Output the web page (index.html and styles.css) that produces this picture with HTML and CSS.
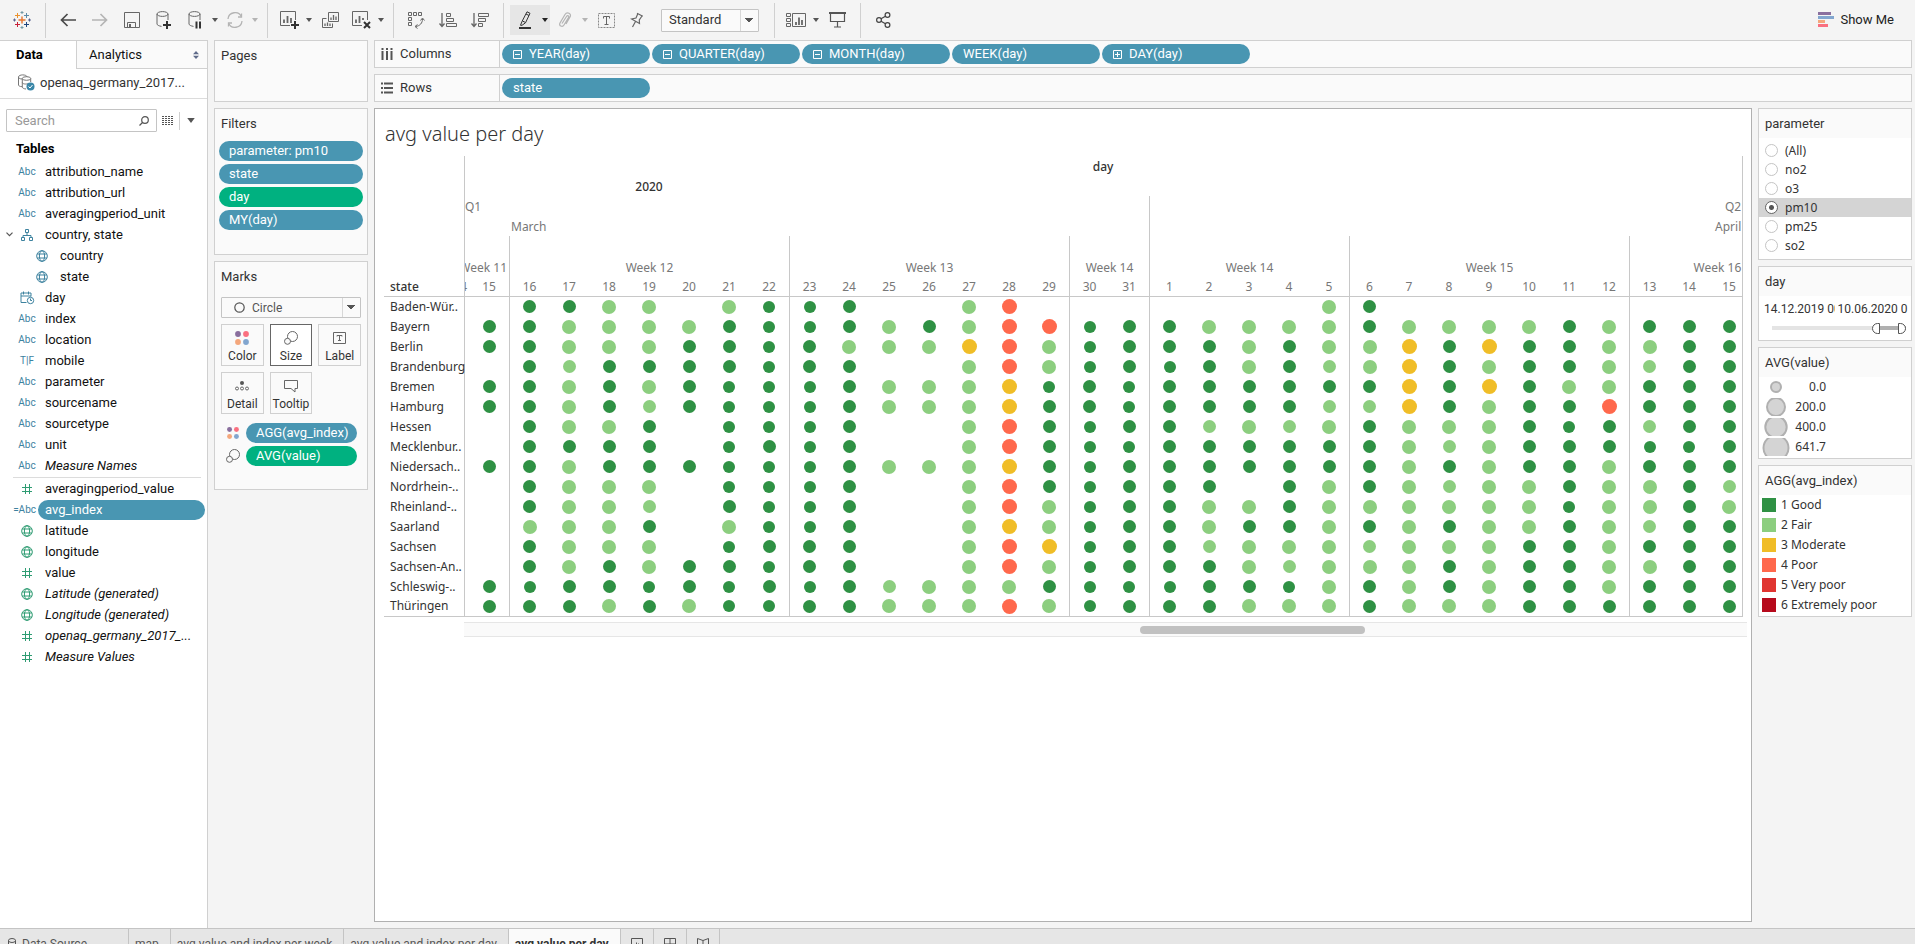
FILE: index.html
```html
<!DOCTYPE html>
<html lang="en">
<head>
<meta charset="utf-8">
<title>avg value per day</title>
<link rel="stylesheet" href="styles.css">
</head>
<body>
<svg class="defs" aria-hidden="true">
  <symbol id="caret" viewBox="0 0 6 4"><path d="M0 0h6L3 4z" fill="currentColor"/></symbol>
  <symbol id="globe" viewBox="0 0 12 12"><g fill="none" stroke="currentColor"><circle cx="6" cy="6" r="5.3"/><ellipse cx="6" cy="6" rx="2.6" ry="5.3"/><path d="M1.2 4h9.6M1.2 8h9.6"/></g></symbol>
  <symbol id="hash" viewBox="0 0 12 12"><path d="M4.5 1v10M8.5 1v10M1 4.5h10M1 8.5h10" fill="none" stroke="currentColor"/></symbol>
  <symbol id="hier" viewBox="0 0 12 12"><path d="M4.5 .5h3v3h-3zM.5 8.5h3v3h-3zM8.500 8.500h3v3h-3zM6 3.500v3M2 8.500v-2h8v2" fill="none" stroke="currentColor"/></symbol>
  <symbol id="cal" viewBox="0 0 15 14"><path d="M6.500 11.500h-5.500v-9.500h10v3.500M1 5h10M3.500 .5v3M8.500 .5v3" fill="none" stroke="currentColor"/><circle cx="10.500" cy="9.500" r="3.200" fill="#fff" stroke="currentColor"/><path d="M10.500 7.500v2h1.500" fill="none" stroke="currentColor"/></symbol>
  <symbol id="dots" viewBox="0 0 14 14"><circle cx="3" cy="3" r="2.900" fill="#8a6f9e"/><circle cx="11" cy="3" r="2.900" fill="#fa7080"/><circle cx="3" cy="11" r="2.900" fill="#f4a77c"/><circle cx="11" cy="11" r="2.900" fill="#82a6cf"/></symbol>
  <symbol id="size" viewBox="0 0 14 14"><g fill="none" stroke="#666"><circle cx="8.500" cy="5.500" r="5"/><circle cx="3.500" cy="10.300" r="3" fill="#fafafa"/></g></symbol>
  <symbol id="minus" viewBox="0 0 9 9"><path d="M.5 .5h8v8h-8zM2 4.500h5" fill="none" stroke="#fff"/></symbol>
  <symbol id="plus" viewBox="0 0 9 9"><path d="M.5 .5h8v8h-8zM2 4.500h5M4.500 2v5" fill="none" stroke="#fff"/></symbol>
</svg>

<div class="app">
  <header class="toolbar">
    <button class="logo" aria-label="Start page"><svg width="18" height="18" viewBox="0 0 18 18" fill="none"><path d="M9 5.500v7M5.500 9h7" stroke="#e8762d" stroke-width="1.400"/><path d="M4.500 2v5M2 4.500h5" stroke="#eb912c"/><path d="M13.500 2v5M11 4.500h5" stroke="#5c8ba8"/><path d="M4.500 11v5M2 13.500h5" stroke="#c72037"/><path d="M13.500 11v5M11 13.500h5" stroke="#1f457e"/><path d="M9 0v3M7.500 1.500h3M9 15v3M7.500 16.500h3" stroke="#7199a6"/><path d="M1.500 7.500v3M0 9h3M16.500 7.500v3M15 9h3" stroke="#5b6591"/></svg></button>
    <span class="sep"></span>
    <button class="tb" aria-label="Back"><svg width="16" height="14" viewBox="0 0 16 14" fill="none" stroke="#4a4a4a" stroke-width="1.700"><path d="M16 7H1.500M7.500 1l-6 6 6 6"/></svg></button>
    <button class="tb" aria-label="Forward"><svg width="16" height="14" viewBox="0 0 16 14" fill="none" stroke="#b4b4b4" stroke-width="1.700"><path d="M0 7h14.500M8.500 1l6 6-6 6"/></svg></button>
    <button class="tb" aria-label="Save"><svg width="16" height="16" viewBox="0 0 16 16" fill="none" stroke="#666"><path d="M.5 .5h15v15H.5zM3.500 15v-4.500h8V15"/><path d="M5 12h2v3H5z" fill="#666" stroke="none"/></svg></button>
    <button class="tb" aria-label="New data source"><svg width="16" height="18" viewBox="0 0 16 18" fill="none" stroke="#666"><ellipse cx="6.500" cy="3" rx="5.500" ry="2.400"/><path d="M1 3v10c0 1 2 2 4.500 2.400M12 3v6"/><path d="M11 10v8M7 14h8" stroke="#333" stroke-width="2"/></svg></button>
    <button class="tb narrow" aria-label="Pause auto updates"><svg width="15" height="18" viewBox="0 0 15 18" fill="none" stroke="#666"><ellipse cx="6.500" cy="3" rx="5.500" ry="2.400"/><path d="M1 3v10c0 1 2 2 4.500 2.400M12 3v6"/><path d="M8.500 10.500v7M12 10.500v7" stroke="#333" stroke-width="2"/></svg></button>
    <button class="drop" aria-label="Pause options"><svg width="6" height="4"><use href="#caret"/></svg></button>
    <button class="tb narrow" aria-label="Run update"><svg width="18" height="16" viewBox="0 0 18 16" fill="none" stroke="#b4b4b4" stroke-width="1.300"><path d="M2 7a7 6.800 0 0 1 13.500-2M16 9a7 6.800 0 0 1-13.500 2"/><path d="M15.500 1.500V5H12M2.500 14.500V11H6"/></svg></button>
    <button class="drop off" aria-label="Update options"><svg width="6" height="4"><use href="#caret"/></svg></button>
    <span class="sep"></span>
    <button class="tb narrow" aria-label="New worksheet"><svg width="19" height="18" viewBox="0 0 19 18" fill="none" stroke="#666"><path d="M10 14.500H.5V.5h15V9"/><path d="M4 12V8.500M7.500 12V5M11 12V7" stroke-width="1.800"/><path d="M15 10v8M11 14h8" stroke="#333" stroke-width="2"/></svg></button>
    <button class="drop" aria-label="Worksheet options"><svg width="6" height="4"><use href="#caret"/></svg></button>
    <button class="tb" aria-label="Duplicate"><svg width="17" height="16" viewBox="0 0 17 16" fill="none" stroke="#666"><path d="M6.500 .5h10v9h-10zM4.500 6.500h-4v9h10v-4"/><path d="M9 8V5.500M11.500 8V3M14 8V4.500M3 14v-2.500M5.500 14v-3.500M8 14v-2.500" stroke-width="1.300"/></svg></button>
    <button class="tb narrow" aria-label="Clear sheet"><svg width="19" height="18" viewBox="0 0 19 18" fill="none" stroke="#666"><path d="M10 14.500H.5V.5h15V9"/><path d="M4 12V8.500M7.500 12V5M11 9V7" stroke-width="1.800"/><path d="M12 11l6 6M18 11l-6 6" stroke="#333" stroke-width="2"/></svg></button>
    <button class="drop" aria-label="Clear options"><svg width="6" height="4"><use href="#caret"/></svg></button>
    <span class="sep"></span>
    <button class="tb" aria-label="Swap rows and columns"><svg width="17" height="17" viewBox="0 0 17 17" fill="none" stroke="#666"><path d="M.5 .5h3v3h-3zM5.500 .5h3v3h-3zM10.500 .5h3v3h-3zM.5 5.500h3v3h-3zM.5 10.500h3v3h-3zM14.500 7c0 4-2.500 7-7 7.500M12.500 8.500l2-2.500 2 2.500M9.500 12.500L7 14.500l2.500 2"/></svg></button>
    <button class="tb" aria-label="Sort ascending"><svg width="18" height="15" viewBox="0 0 18 15" fill="none" stroke="#666"><path d="M3 0v13M.5 10.500L3 13.500l2.500-3" stroke-width="1.300"/><path d="M7.500 .5h4v3h-4zM7.500 5.500h7v3h-7zM7.500 10.500h10v3h-10z"/></svg></button>
    <button class="tb" aria-label="Sort descending"><svg width="18" height="15" viewBox="0 0 18 15" fill="none" stroke="#666"><path d="M3 0v13M.5 10.500L3 13.500l2.500-3" stroke-width="1.300"/><path d="M7.500 .5h10v3h-10zM7.500 5.500h7v3h-7zM7.500 10.500h4v3h-4z"/></svg></button>
    <span class="sep"></span>
    <div class="active-tool">
      <button class="tb narrow" aria-label="Highlight"><svg width="14" height="18" viewBox="0 0 14 18" fill="none" stroke="#333"><path d="M9 .8l3 1.500-4.500 9.500-3.500 2.500H2.500L4 10.500zM4.500 10l3 1.500M8 3l3 1.500"/><path d="M1 17h12" stroke-width="2"/></svg></button>
      <button class="drop dark" aria-label="Highlight options"><svg width="6" height="4"><use href="#caret"/></svg></button>
    </div>
    <button class="tb narrow" aria-label="Group members"><svg width="14" height="16" viewBox="0 0 14 16" fill="none" stroke="#b4b4b4" stroke-width="1.200"><path d="M4 11.500L8.500 4.500c1-1.500 3-.5 2 1L6 13c-1.500 2.500-5.500 1-4-2L7 2.500c2-3 7-1 5 2.500l-4 7"/></svg></button>
    <button class="drop off" aria-label="Group options"><svg width="6" height="4"><use href="#caret"/></svg></button>
    <button class="tb" aria-label="Show mark labels"><svg width="17" height="15" viewBox="0 0 17 15" fill="none" stroke="#666"><path d="M.5 .5h16v14H.5z" stroke="#888" stroke-dasharray="2 1"/><path d="M5.500 5.500v-2h6v2M8.500 3.500v8M6.500 11.500h4"/></svg></button>
    <button class="tb narrow" aria-label="Fix axes"><svg width="14" height="16" viewBox="0 0 14 16" fill="none" stroke="#666" stroke-width="1.200"><path d="M7 1.200L12.800 4.200M7.800 1.800L6 6L1.500 7L9.500 11.500L9.300 8L12 4M5.500 9.500L2.500 15"/></svg></button>
    <select class="fit" aria-label="Fit"><option>Standard</option></select>
    <span class="sep wide"></span>
    <button class="tb narrow" aria-label="Show or hide cards"><svg width="20" height="15" viewBox="0 0 20 15" fill="none" stroke="#666"><path d="M.5 .5h4v3h-4zM.5 5.500h4v3h-4zM.5 10.500h4v3h-4zM6.500 .5h13v13h-13z"/><path d="M10 12V9M13 12V4.500M16 12V7" stroke-width="1.800"/></svg></button>
    <button class="drop" aria-label="Card options"><svg width="6" height="4"><use href="#caret"/></svg></button>
    <button class="tb" aria-label="Presentation mode"><svg width="17" height="16" viewBox="0 0 17 16" fill="none" stroke="#555"><path d="M0 1h17" stroke-width="2"/><path d="M1.500 1v8.500h14V1M8.500 9.500v5M5 15h7" stroke-width="1.200"/></svg></button>
    <span class="sep"></span>
    <button class="tb" aria-label="Share"><svg width="15" height="16" viewBox="0 0 15 16" fill="none" stroke="#444" stroke-width="1.200"><circle cx="3" cy="8" r="2.400"/><circle cx="11.500" cy="3" r="2.400"/><circle cx="11.500" cy="13" r="2.400"/><path d="M5 6.800l4.500-2.600M5 9.200l4.500 2.600"/></svg></button>
    <button class="showme"><svg width="16" height="16" viewBox="0 0 16 16"><path d="M0 0h13v3H0z" fill="#8a6f9e"/><path d="M0 4h16v3H0z" fill="#82a6cf"/><path d="M0 8h7v3H0z" fill="#f4a77c"/><path d="M0 12h10v3H0z" fill="#fa7080"/></svg>Show Me</button>
  </header>

  <div class="work">
    <aside class="data">
      <div class="panes"><button class="pane on">Data</button><button class="pane">Analytics<svg width="6" height="8" viewBox="0 0 6 8"><path d="M0 3.200h6L3 0zM0 4.800h6L3 8z" fill="#5f6b8a"/></svg></button></div>
      <button class="source"><svg width="17" height="17" viewBox="0 0 17 17" fill="none" stroke="#777"><path d="M.5 3v8c0 1 1.500 1.500 3.500 1.700M.5 3C.5 .2 9 .2 9 3M.5 3c0 1.500 2 2 3.500 2"/><ellipse cx="8.500" cy="4.500" rx="4.200" ry="1.800"/><path d="M4.300 4.500V13c0 1 1.500 1.800 3.700 2M12.700 4.500V8M4.300 8.500c0 1.500 4 2 6 1"/><circle cx="12.500" cy="12.500" r="4" fill="#3a87a8" stroke="none"/><path d="M10.500 12.500l1.500 1.500 2.500-3" stroke="#fff"/></svg><span>openaq_germany_2017...</span></button>
      <div class="find">
        <label class="search"><input type="text" placeholder="Search" aria-label="Search"><svg width="10" height="10" viewBox="0 0 10 10" fill="none" stroke="#555" stroke-width="1.200"><circle cx="6" cy="4" r="3.300"/><path d="M3.500 6.500L.5 9.500"/></svg></label>
        <button class="grid-btn" aria-label="View data"><svg width="12" height="10" viewBox="0 0 12 10"><path d="M0 .5h12M0 2.500h12M0 4.500h12M0 6.500h12M0 8.500h12" stroke="#555" stroke-dasharray="2 1"/></svg></button>
        <button class="menu-btn" aria-label="Data pane menu"><svg width="8" height="5"><use href="#caret"/></svg></button>
      </div>
      <h2>Tables</h2>
      <ul class="fields dim">
        <li><i>Abc</i><span>attribution_name</span></li>
        <li><i>Abc</i><span>attribution_url</span></li>
        <li><i>Abc</i><span>averagingperiod_unit</span></li>
        <li class="open"><svg class="chev" width="7" height="5" viewBox="0 0 7 5" fill="none" stroke="#555" stroke-width="1.200"><path d="M.5 .7l3 3 3-3"/></svg><i><svg width="12" height="12"><use href="#hier"/></svg></i><span>country, state</span></li>
        <li class="sub"><i><svg width="12" height="12"><use href="#globe"/></svg></i><span>country</span></li>
        <li class="sub"><i><svg width="12" height="12"><use href="#globe"/></svg></i><span>state</span></li>
        <li><i><svg width="15" height="14"><use href="#cal"/></svg></i><span>day</span></li>
        <li><i>Abc</i><span>index</span></li>
        <li><i>Abc</i><span>location</span></li>
        <li><i>T|F</i><span>mobile</span></li>
        <li><i>Abc</i><span>parameter</span></li>
        <li><i>Abc</i><span>sourcename</span></li>
        <li><i>Abc</i><span>sourcetype</span></li>
        <li><i>Abc</i><span>unit</span></li>
        <li class="gen"><i>Abc</i><span>Measure Names</span></li>
      </ul>
      <ul class="fields mea">
        <li><i><svg width="12" height="12"><use href="#hash"/></svg></i><span>averagingperiod_value</span></li>
        <li class="sel"><i>=Abc</i><span>avg_index</span></li>
        <li><i><svg width="12" height="12"><use href="#globe"/></svg></i><span>latitude</span></li>
        <li><i><svg width="12" height="12"><use href="#globe"/></svg></i><span>longitude</span></li>
        <li><i><svg width="12" height="12"><use href="#hash"/></svg></i><span>value</span></li>
        <li class="gen"><i><svg width="12" height="12"><use href="#globe"/></svg></i><span>Latitude (generated)</span></li>
        <li class="gen"><i><svg width="12" height="12"><use href="#globe"/></svg></i><span>Longitude (generated)</span></li>
        <li class="gen"><i><svg width="12" height="12"><use href="#hash"/></svg></i><span>openaq_germany_2017_...</span></li>
        <li class="gen"><i><svg width="12" height="12"><use href="#hash"/></svg></i><span>Measure Values</span></li>
      </ul>
    </aside>

    <aside class="cards">
      <section class="card pages"><h3>Pages</h3></section>
      <section class="card filters"><h3>Filters</h3>
        <button class="pill">parameter: pm10</button>
        <button class="pill">state</button>
        <button class="pill green">day</button>
        <button class="pill">MY(day)</button>
      </section>
      <section class="card marks"><h3>Marks</h3>
        <label class="mark-type"><svg width="11" height="11" viewBox="0 0 11 11"><circle cx="5.500" cy="5.500" r="4.700" fill="none" stroke="#555" stroke-width="1.200"/></svg><select aria-label="Mark type"><option>Circle</option></select></label>
        <div class="props">
          <button><svg width="14" height="14"><use href="#dots"/></svg>Color</button>
          <button class="on"><svg width="14" height="14"><use href="#size"/></svg>Size</button>
          <button><svg width="13" height="14" viewBox="0 0 13 14" fill="none" stroke="#666"><path d="M.5 1.500h12v11H.5zM4 5.500V4.500h5v1M6.500 4.500v5M5 9.500h3"/></svg>Label</button>
          <button><svg width="14" height="14" viewBox="0 0 14 14" fill="none" stroke="#666"><circle cx="7" cy="4" r="2" fill="#555" stroke="none"/><circle cx="2" cy="9.500" r="1.500"/><circle cx="7" cy="9.500" r="1.500"/><circle cx="12" cy="9.500" r="1.500"/></svg>Detail</button>
          <button><svg width="14" height="14" viewBox="0 0 14 14" fill="none" stroke="#666"><path d="M.5 1.500h13v8h-2.500v3.500L7 9.500H.5z"/></svg>Tooltip</button>
        </div>
        <div class="encode"><svg width="12" height="12"><use href="#dots"/></svg><button class="pill">AGG(avg_index)</button></div>
        <div class="encode"><svg width="14" height="14"><use href="#size"/></svg><button class="pill green">AVG(value)</button></div>
      </section>
    </aside>

    <main class="main">
      <section class="shelf"><h3><svg width="12" height="12" viewBox="0 0 12 12"><path d="M1.500 0v2M1.500 3v9M6 0v2M6 3v9M10.500 0v2M10.500 3v9" stroke="#555" stroke-width="2"/></svg>Columns</h3>
        <button class="pill"><svg width="9" height="9"><use href="#minus"/></svg>YEAR(day)</button>
        <button class="pill"><svg width="9" height="9"><use href="#minus"/></svg>QUARTER(day)</button>
        <button class="pill"><svg width="9" height="9"><use href="#minus"/></svg>MONTH(day)</button>
        <button class="pill">WEEK(day)</button>
        <button class="pill"><svg width="9" height="9"><use href="#plus"/></svg>DAY(day)</button>
      </section>
      <section class="shelf"><h3><svg width="12" height="12" viewBox="0 0 12 12"><path d="M0 1.500h2M3 1.500h9M0 6h2M3 6h9M0 10.500h2M3 10.500h9" stroke="#555" stroke-width="2"/></svg>Rows</h3>
        <button class="pill">state</button>
      </section>
      <div class="stage">
        <section class="viz">
          <h1>avg value per day</h1>
          <div class="frame">
            <table>
              <colgroup><col class="c-state"><col class="c-cut"><col class="c-day" span="32"></colgroup>
              <thead>
                <tr class="strong"><td></td><th colspan="33" class="left-edge end">day</th></tr>
                <tr class="strong"><td></td><td colspan="2" class="left-edge"></td><th colspan="7">2020</th><td colspan="24"></td></tr>
                <tr><td></td><th colspan="18" class="left-edge first">Q1</th><th colspan="15" class="edge last">Q2</th></tr>
                <tr><td></td><td colspan="2" class="left-edge"></td><th colspan="16" class="month">March</th><th colspan="15" class="edge last">April</th></tr>
                <tr class="weeks"><td></td><th colspan="2" class="left-edge"><span class="cutword">Week 11</span></th><th colspan="7" class="edge">Week 12</th><th colspan="7" class="edge">Week 13</th><th colspan="2" class="edge">Week 14</th><th colspan="5" class="edge">Week 14</th><th colspan="7" class="edge">Week 15</th><th colspan="3" class="edge last">Week 16</th></tr>
                <tr class="days" id="days"><th class="rowhead">state</th><th class="left-edge"><span class="cutword">4</span></th></tr>
              </thead>
              <tbody id="rows"></tbody>
            </table>
          </div>
          <div class="scroll"><span></span></div>
        </section>
        <aside class="legends">
          <fieldset class="card param"><legend>parameter</legend>
            <label><input type="radio" name="p">(All)</label>
            <label><input type="radio" name="p">no2</label>
            <label><input type="radio" name="p">o3</label>
            <label class="on"><input type="radio" name="p" checked>pm10</label>
            <label><input type="radio" name="p">pm25</label>
            <label><input type="radio" name="p">so2</label>
          </fieldset>
          <section class="card dayrange"><h3>day</h3>
            <div class="dates"><span>14.12.2019 00:00:00</span><span>10.06.2020 01:00:00</span></div>
            <div class="range"><input type="range" class="from" value="79" aria-label="From"><input type="range" class="to" value="100" aria-label="To"></div>
          </section>
          <section class="card sizes"><h3>AVG(value)</h3>
            <ul>
              <li><svg width="28" height="18"><circle cx="14" cy="9" r="5"/></svg><span>0.0</span></li>
              <li><svg width="28" height="18"><circle cx="14" cy="9" r="9"/></svg><span>200.0</span></li>
              <li><svg width="28" height="18"><circle cx="14" cy="9" r="10.700"/></svg><span>400.0</span></li>
              <li><svg width="28" height="18"><circle cx="14" cy="10" r="12.500"/></svg><span>641.7</span></li>
            </ul>
          </section>
          <section class="card colors"><h3>AGG(avg_index)</h3>
            <ul>
              <li class="k1">1 Good</li><li class="k2">2 Fair</li><li class="k3">3 Moderate</li><li class="k4">4 Poor</li><li class="k5">5 Very poor</li><li class="k6">6 Extremely poor</li>
            </ul>
          </section>
        </aside>
      </div>
    </main>
  </div>

  <nav class="sheets">
    <button class="ds"><svg width="8" height="12" viewBox="0 0 8 12" fill="none" stroke="#555"><ellipse cx="4" cy="2.500" rx="3.500" ry="2"/><path d="M.5 2.500V10c0 2 7 2 7 0V2.500"/></svg>Data Source</button>
    <button>map</button>
    <button>avg value and index per week</button>
    <button>avg value and index per day</button>
    <button class="on">avg value per day</button>
    <button class="add" aria-label="New worksheet"><svg width="12" height="12" viewBox="0 0 12 12" fill="none" stroke="#555"><path d="M6 11.500H.5V.5h11V7M3.500 9V7M5.500 9V4.500M7.500 7V5.500M9.500 8v4M7.500 10h4"/></svg></button>
    <button class="add" aria-label="New dashboard"><svg width="12" height="12" viewBox="0 0 12 12" fill="none" stroke="#555"><path d="M6 11.500H.5V.5h11V7M.5 6h11M6 .5v11M9.500 8v4"/></svg></button>
    <button class="add" aria-label="New story"><svg width="12" height="12" viewBox="0 0 12 12" fill="none" stroke="#555"><path d="M6 11.500L.5 10V.5L6 2.500l5.500-2V7M6 2.500v9M9.500 8v4"/></svg></button>
  </nav>
</div>
<script src="chart.js"></script>
</body>
</html>
```
FILE: styles.css
```css
* { box-sizing: border-box; }
body {
  margin: 0;
  height: 100vh;
  overflow: hidden;
  background: #f4f4f4;
  color: #333;
  font: 13px/20px Roboto, "Liberation Sans", sans-serif;
}
button, input, select { font: inherit; color: inherit; }
button { padding: 0; border: 0; background: none; }
h1, h2, h3, ul { margin: 0; padding: 0; font-weight: 400; list-style: none; }
h3 { font-size: 13px; }
svg { flex: none; display: block; }
.defs { position: absolute; width: 0; height: 0; }

.app { display: flex; flex-direction: column; height: calc(100vh + 14px); }

/* toolbar */
.toolbar { display: flex; align-items: center; height: 40px; flex: none; }
.toolbar button { display: flex; align-items: center; justify-content: center; height: 30px; }
.toolbar .logo { width: 45px; padding-right: 2px; }
.sep { width: 1px; height: 35px; margin: 0 6px 0 7px; background: #d0d0d0; }
.logo + .sep { margin-left: 0; }
.sep.wide { margin-left: 15px; }
.tb { width: 32px; }
.tb.narrow { width: 30px; }
.drop { width: 10px; color: #555; }
.drop.off { color: #b4b4b4; }
.drop.dark { color: #222; }
.active-tool { display: flex; background: #e6e6e6; }
.fit, .mark-type {
  border: 1px solid #c4c4c4;
  border-radius: 1px;
  background-color: #fafafa;
  background-image: linear-gradient(to bottom right, #555 50%, transparent 51%), linear-gradient(to bottom left, #555 50%, transparent 51%), linear-gradient(#d8d8d8, #d8d8d8);
  background-repeat: no-repeat;
  background-size: 4px 5px, 4px 5px, 1px 100%;
  background-position: right 5px center, right 9px center, right 17px center;
}
.fit { width: 98px; height: 23px; margin-left: 9px; padding: 0 7px; appearance: none; }
.toolbar .showme { gap: 6px; margin-left: auto; margin-right: 21px; color: #222; }

.work { display: flex; flex: 1; min-height: 0; }

/* data pane */
.data { width: 208px; flex: none; border: solid #d0d0d0; border-width: 1px 1px 0 0; background: #fff; color: #111; }
.panes { display: flex; height: 28px; }
.pane { flex: 1; display: flex; align-items: center; justify-content: space-between; padding: 0 8px 0 12px; border: solid #d0d0d0; border-width: 0 0 1px 1px; background: #fafafa; }
.pane.on { flex: 0 0 76px; padding: 0 0 0 16px; border: 0; background: #fff; color: #000; font-weight: 700; }
.source { display: flex; align-items: center; gap: 5px; width: 100%; height: 30px; padding: 0 0 2px 18px; border-bottom: 1px solid #dcdcdc; color: #333; }
.find { display: flex; align-items: center; padding: 10px 0 0 6px; }
.search { display: flex; align-items: center; width: 151px; height: 23px; padding: 0 7px 0 8px; border: 1px solid #c4c4c4; border-radius: 1px; }
.search input { flex: 1; min-width: 0; padding: 0; border: 0; outline: 0; background: none; }
.search input::placeholder { color: #999; opacity: 1; }
.grid-btn { display: flex; padding: 4px 5px; border-right: 1px solid #d0d0d0; }
.menu-btn { padding: 4px 7px; color: #555; }
.data h2 { padding: 7px 0 2px 16px; color: #000; font-size: 13px; font-weight: 700; }
.fields li { display: flex; align-items: center; height: 21px; padding-left: 16px; }
.fields i { display: flex; justify-content: center; width: 22px; font-style: normal; font-size: 10px; color: #3d829f; }
.mea i { color: #2f9c73; }
.fields span { padding: 0 0 0 7px; }
.fields .sub { padding-left: 31px; }
.fields .open { padding-left: 6px; }
.fields .chev { margin-right: 3px; }
.fields .gen span { font-style: italic; }
.mea::before { content: ""; display: block; height: 1px; margin: 1px 6px 0 13px; background: #dcdcdc; }
.fields .sel i { justify-content: flex-end; padding-right: 2px; color: #3d829f; }
.fields .sel { padding-right: 2px; }
.fields .sel span { flex: 1; border-radius: 10px; background: #4996b2; color: #fff; }

/* cards */
.card { margin: 0; padding: 0; min-width: 0; border: 1px solid #d0d0d0; background: #fafafa; }
.cards { display: flex; flex-direction: column; gap: 6px; width: 154px; margin: 0 6px; flex: none; }
.cards h3 { padding: 5px 6px; }
.pages { height: 62px; }
.filters { height: 147px; }
.marks { height: 229px; }
.pill { display: flex; align-items: center; height: 20px; padding: 0 10px; border-radius: 10px; background: #4996b2; color: #fff; white-space: nowrap; }
.pill.green { background: #00b180; }
.filters .pill { width: calc(100% - 8px); margin: 2px 0 3px 4px; }
.mark-type { display: flex; align-items: center; height: 21px; margin: 5px 6px 6px; padding-left: 12px; font-size: 12px; }
.mark-type select { flex: 1; height: 19px; padding: 0 0 0 7px; appearance: none; border: 0; background: none; color: #555; }
.props { display: grid; grid-template-columns: repeat(3, 1fr); gap: 6px; margin: 0 6px 9px; }
.props button { display: flex; flex-direction: column; align-items: center; justify-content: space-between; height: 42px; padding: 6px 0 0; border: 1px solid #d0d0d0; font-size: 12px; line-height: 17px; }
.props .on { border-color: #666; background: #fff; }
.encode { display: grid; grid-template-columns: 26px minmax(0, 1fr); justify-items: center; align-items: center; margin: 0 10px 3px 5px; }
.encode .pill { width: 100%; }

/* shelves */
.main { display: flex; flex-direction: column; gap: 6px; flex: 1; min-width: 0; padding-right: 3px; }
.shelf { display: flex; align-items: center; gap: 2px; height: 28px; flex: none; border: 1px solid #d0d0d0; background: #fafafa; }
.shelf h3 { display: flex; align-items: center; gap: 7px; width: 125px; height: 26px; padding-left: 6px; border-right: 1px solid #d0d0d0; }
.shelf .pill { width: 148px; padding: 0 11px; gap: 7px; }

/* worksheet */
.stage { display: flex; gap: 6px; flex: 1; min-height: 0; }
.viz { flex: 1; min-width: 0; margin-bottom: 6px; padding: 11px 8px 0 9px; border: 1px solid #b0b0b0; background: #fff; font-family: "Noto Sans", "Open Sans", sans-serif; }
.viz h1 { padding-left: 1px; font: 300 20px/28px "Noto Sans", "Open Sans", sans-serif; }
.frame { margin-top: 8px; border-right: 1px solid #c8c8c8; overflow: hidden; }
table { width: 1365px; table-layout: fixed; border-collapse: separate; border-spacing: 0; font-size: 12px; line-height: 18px; }
.c-state { width: 80px; }
.c-cut { width: 5px; }
.c-day { width: 40px; }
td, th { height: 20px; padding: 0; font-weight: 400; text-align: center; white-space: nowrap; }
thead { color: #777; }
thead th { padding-top: 2px; }
.strong th, .days .rowhead { color: #333; font-weight: 500; }
.weeks th { height: 40px; line-height: 16px; vertical-align: bottom; }
.left-edge, .edge { border-left: 1px solid #c8c8c8; }
.first { text-align: left; }
.month { padding-left: 2px; text-align: left; }
.end { padding-right: 8px; }
.last { padding-right: 8px; text-align: right; }
.days th { height: 21px; border-bottom: 1px solid #c8c8c8; }
.rowhead { padding-left: 6px; text-align: left; color: #333; }
tbody td, tbody th { padding-bottom: 1px; }
.cutword { display: flex; justify-content: flex-end; width: 100%; padding-right: 2px; overflow: hidden; }
tbody tr:last-child > * { border-bottom: 1px solid #c8c8c8; }
.dot { display: block; margin: 0 auto; border-radius: 50%; background: #2f9144; }
.g { width: 12px; height: 12px; }
.G { width: 13px; height: 13px; }
.f { width: 13px; height: 13px; background: #8cce7f; }
.F { width: 14px; height: 14px; background: #8cce7f; }
.M { width: 15px; height: 15px; background: #f0bd27; }
.P { width: 15px; height: 15px; background: #ff684c; }
.scroll { height: 15px; margin: 5px -4px 0 80px; border: solid #e6e6e6; border-width: 1px 0; background: #fafafa; }
.scroll span { display: block; width: 17.5%; height: 8px; margin: 3px 0 0 52.7%; border-radius: 4px; background: #c1c1c1; }

/* legends */
.legends { display: flex; flex-direction: column; gap: 6px; width: 154px; flex: none; font-family: "Noto Sans", "Open Sans", sans-serif; font-size: 12px; }
.legends .card { background: #fff; }
.legends h3, .legends legend { float: left; width: 100%; height: 29px; padding: 5px 6px; background: #fafafa; font: 13px/20px Roboto, sans-serif; }
.param label { display: flex; align-items: center; gap: 7px; clear: both; height: 19px; padding-left: 6px; }
.param legend + label { margin-top: 32px; }
.param { height: 152px; }
.param .on { background: #d4d4d4; }
.param input { appearance: none; width: 13px; height: 13px; margin: 0; border: 1px solid #c4c4c4; border-radius: 50%; background: #fff; }
.param input:checked { border-color: #666; background: radial-gradient(circle, #555 2px, #fff 3px); }
.dayrange { height: 75px; }
.dates { display: flex; gap: 3px; clear: both; height: 23px; padding: 3px 3px 0 5px; font-family: Roboto, sans-serif; }
.dates span { flex: 1; overflow: hidden; white-space: nowrap; }
.range { position: relative; height: 12px; margin: 3px 5px 0 13px; background: linear-gradient(#e4e4e4, #e4e4e4) no-repeat center / 100% 4px; }
.range input { position: absolute; inset: 0; width: 100%; height: 12px; margin: 0; appearance: none; background: none; pointer-events: none; }
.range .from { background: linear-gradient(#b0b0b0, #b0b0b0) no-repeat right center / 22% 4px; }
.range input::-webkit-slider-thumb { appearance: none; width: 8px; height: 11px; border: 1px solid #555; border-radius: 6px 0 0 6px; background: #fff; pointer-events: auto; }
.range .to::-webkit-slider-thumb { border-radius: 0 6px 6px 0; }
.sizes ul, .colors ul { clear: both; }
.sizes { height: 112px; }
.sizes li { display: flex; align-items: center; height: 20px; padding-left: 3px; }
.sizes span { width: 36px; text-align: right; }
.sizes circle { fill: #d4d4d4; stroke: #b0b0b0; stroke-width: 2; }
.colors { height: 152px; }
.colors li { display: flex; align-items: center; gap: 5px; height: 20px; padding-left: 3px; }
.colors li::before { content: ""; width: 14px; height: 14px; background: #2f9144; }
.colors .k2::before { background: #8cce7f; }
.colors .k3::before { background: #f0bd27; }
.colors .k4::before { background: #ff684c; }
.colors .k5::before { background: #e03531; }
.colors .k6::before { background: #b60a1c; }

/* sheet tabs */
.sheets { display: flex; height: 30px; flex: none; border-top: 1px solid #c4c4c4; background: #e6e6e6; font-size: 12px; color: #555; }
.sheets button { padding: 0 11px 0 6px; border-right: 1px solid #c4c4c4; }
.sheets .ds { display: flex; align-items: center; gap: 6px; width: 129px; padding-left: 8px; }
.sheets .on { background: #fafafa; color: #333; font-weight: 700; }
.sheets .add { display: flex; align-items: center; justify-content: center; width: 33px; padding: 0; }
```
FILE: chart.js
```js
// One letter per day: G/g good, F/f fair, M moderate, P poor; lower case marks the smaller circle.
const data = [
  ["Baden-Wür..", ". GGFF.Fg gG..FP. .. ....F G...... ..."],
  ["Bayern", "G GFFFFGg gGFGFPP gG GFFFF GFFFFGF GGG"],
  ["Berlin", "G GFFFGGg GFFFMPF gG GGFGF FMGMGGF FGG"],
  ["Brandenburg", ". GfGGGGg GG..FPF gG gGFGf FMGFGGF fGG"],
  ["Bremen", "G GFGFGgg gGFFFMg Gg GGGGG GMGMGFF GGG"],
  ["Hamburg", "G GFGfGgg gGFFFMG Gg GGGGf fMGFGGP GGG"],
  ["Hessen", ". GFFG.gg gG..FPG gG GfFfF GFFFGgG fGG"],
  ["Mecklenbur..", ". GGGG.gG gG..FPG gg GGGGG GFfFGGG ggG"],
  ["Niedersach..", "G GFGGGgg gGFFFMG gG GGGGG GFGFGGF GGG"],
  ["Nordrhein-..", ". GFFF.gg gG..FPG gG GG.GF GFfFFGF FGf"],
  ["Rheinland-..", ". GFFf.Gg gG..FPF gG GFFGF FFFFFgF FGF"],
  ["Saarland", ". FFFG.Fg gG..FMF gG GFGGF GFGFFGF fGG"],
  ["Sachsen", ". GFFF.gG GG..FPM gG GfFFF fFFFGGF GGG"],
  ["Sachsen-An..", ". GFGFGGg GG..FPF gG GGFfF FFGFGGF FGG"],
  ["Schleswig-..", "G gGGgGgG gGfFFFG gg gGGgF GFGFGGF GGG"],
  ["Thüringen", "G GGFGFgg GGFFFPF gG GGFFF GFFFGGG GGG"]
];
const weekStarts = [1, 8, 15, 17, 22, 29];
const edge = i => weekStarts.includes(i) ? ' class="edge"' : "";

const days = Array.from({ length: 32 }, (_, i) => i < 17 ? i + 15 : i - 16);
document.getElementById("days").insertAdjacentHTML("beforeend",
  days.map((d, i) => `<th${edge(i)}>${d}</th>`).join(""));

document.getElementById("rows").innerHTML = data.map(([name, marks]) =>
  `<tr><th class="rowhead">${name}</th><td class="left-edge"></td>` +
  [...marks.replace(/ /g, "")].map((c, i) =>
    `<td${edge(i)}>${c === "." ? "" : `<span class="dot ${c}"></span>`}</td>`).join("") +
  "</tr>").join("");
```
